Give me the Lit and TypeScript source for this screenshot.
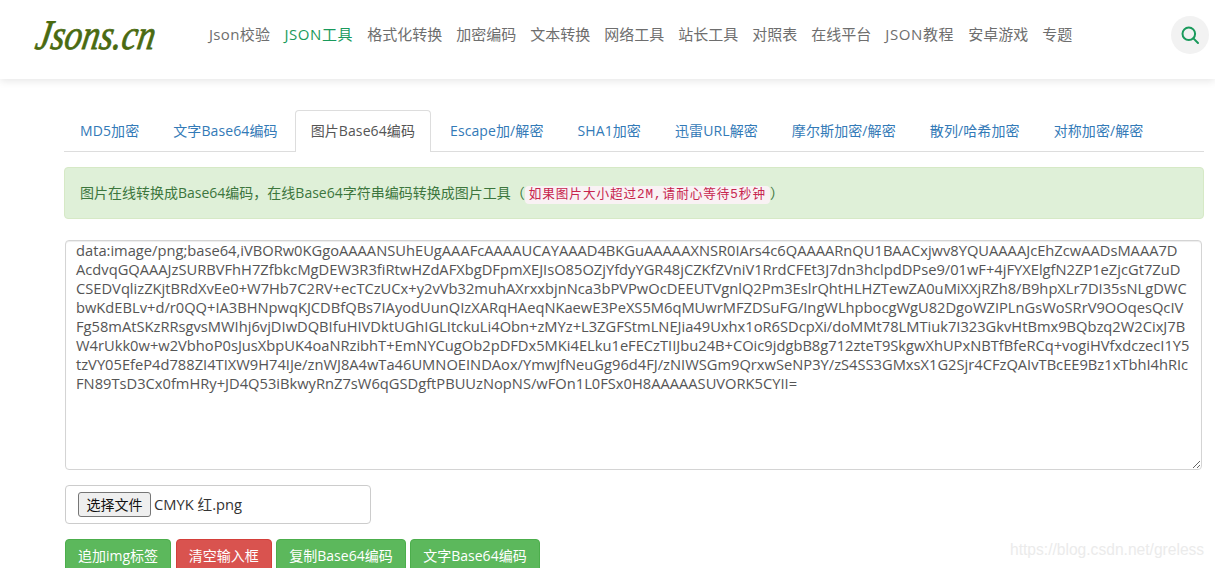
import { LitElement, html, css } from "lit";
import { customElement } from "lit/decorators.js";

const NAV = ["Json校验", "JSON工具", "格式化转换", "加密编码", "文本转换", "网络工具", "站长工具", "对照表", "在线平台", "JSON教程", "安卓游戏", "专题"];
const TABS = ["MD5加密", "文字Base64编码", "图片Base64编码", "Escape加/解密", "SHA1加密", "迅雷URL解密", "摩尔斯加密/解密", "散列/哈希加密", "对称加密/解密"];
const DATA = [
  "data:image/png;base64,iVBORw0KGgoAAAANSUhEUgAAAFcAAAAUCAYAAAD4BKGuAAAAAXNSR0IArs4c6QAAAARnQU1BAACxjwv8YQUAAAAJcEhZcwAADsMAAA7D",
  "AcdvqGQAAAJzSURBVFhH7ZfbkcMgDEW3R3fiRtwHZdAFXbgDFpmXEJIsO85OZjYfdyYGR48jCZKfZVniV1RrdCFEt3J7dn3hclpdDPse9/01wF+4jFYXElgfN2ZP1eZjcGt7ZuD",
  "CSEDVqlizZKjtBRdXvEe0+W7Hb7C2RV+ecTCzUCx+y2vVb32muhAXrxxbjnNca3bPVPwOcDEEUTVgnlQ2Pm3EslrQhtHLHZTewZA0uMiXXjRZh8/B9hpXLr7DI35sNLgDWC",
  "bwKdEBLv+d/r0QQ+IA3BHNpwqKJCDBfQBs7IAyodUunQIzXARqHAeqNKaewE3PeXS5M6qMUwrMFZDSuFG/IngWLhpbocgWgU82DgoWZIPLnGsWoSRrV9OOqesQcIV",
  "Fg58mAtSKzRRsgvsMWIhj6vjDIwDQBIfuHIVDktUGhIGLItckuLi4Obn+zMYz+L3ZGFStmLNEJia49Uxhx1oR6SDcpXi/doMMt78LMTiuk7I323GkvHtBmx9BQbzq2W2CixJ7B",
  "W4rUkk0w+w2VbhoP0sJusXbpUK4oaNRzibhT+EmNYCugOb2pDFDx5MKi4ELku1eFECzTIIJbu24B+COic9jdgbB8g712zteT9SkgwXhUPxNBTfBfeRCq+vogiHVfxdczecI1Y5",
  "tzVY05EfeP4d788ZI4TIXW9H74IJe/znWJ8A4wTa46UMNOEINDAox/YmwJfNeuGg96d4FJ/zNIWSGm9QrxwSeNP3Y/zS4SS3GMxsX1G2Sjr4CFzQAIvTBcEE9Bz1xTbhI4hRIc",
  "FN89TsD3Cx0fmHRy+JD4Q53iBkwyRnZ7sW6qGSDgftPBUUzNopNS/wFOn1L0FSx0H8AAAAASUVORK5CYII=",
].join("\n");

@customElement("app-root")
export class AppRoot extends LitElement {
  static styles = css`
    :host {
      display: block;
      position: relative;
      height: 568px;
      overflow: hidden;
      background: #fff;
      font-family: "Open Sans", "Noto Sans CJK SC", sans-serif;
      font-size: 14px;
      color: #555;
    }
    * { box-sizing: border-box; }
    .header {
      display: flex;
      align-items: center;
      height: 79px;
      padding: 0 6px 10px 35px;
      background: #fff;
      box-shadow: 0 2px 8px rgba(0, 0, 0, 0.1);
    }
    .logo {
      width: 174px;
      font-family: "Liberation Serif", serif;
      font-style: italic;
      font-size: 42px;
      color: #4a6a10;
      -webkit-text-stroke: 0.8px #4a6a10;
      line-height: 40px;
      white-space: nowrap;
      transform: translateX(-2px) skewX(-10deg) scaleX(0.83);
      transform-origin: left bottom;
    }
    .nav { display: flex; gap: 14px; margin-top: -2px; font-size: 15px; color: #6e6e6e; white-space: nowrap; }
    .nav .on { color: #1a9a5c; }
    .nav .json { letter-spacing: 0.6px; }
    .nav .lower { letter-spacing: 0.33px; }
    .search {
      margin-left: auto;
      width: 38px;
      height: 38px;
      border-radius: 50%;
      background: #f2f2f2;
      display: flex;
      align-items: center;
      justify-content: center;
    }
    .main { padding: 31px 11px 0 64px; }
    .tabs { display: flex; border-bottom: 1px solid #ddd; height: 42px; letter-spacing: 0.1px; }
    .tab {
      margin-right: 2px;
      padding: 10px 15px;
      border: 1px solid transparent;
      border-bottom: 0;
      border-radius: 4px 4px 0 0;
      height: 42px;
      line-height: 20px;
      color: #337ab7;
      white-space: nowrap;
    }
    .tab.on {
      color: #555;
      background: #fff;
      border-color: #ddd;
      margin-left: -1px;
      margin-right: 3px;
    }
    .alert {
      margin-top: 15px;
      height: 52px;
      padding: 15px;
      background: #dff0d8;
      border: 1px solid #d6e9c6;
      border-radius: 4px;
      color: #3c763d;
      line-height: 20px;
      white-space: nowrap;
    }
    code {
      font-family: "Liberation Mono", "Noto Sans CJK SC", monospace;
      font-size: 12.6px;
      letter-spacing: 0.95px;
      color: #c7254e;
      background: #f9f2f4;
      border-radius: 4px;
      padding: 2px 4px;
    }
    textarea {
      display: block;
      margin: 21px 0 0 1px;
      width: 1137px;
      height: 230px;
      padding: 0 10px;
      border: 1px solid #d4d4d4;
      border-radius: 4px;
      box-shadow: inset 0 1px 1px rgba(0, 0, 0, 0.075);
      font: inherit;
      font-size: 14.7px;
      line-height: 19px;
      color: #555;
      white-space: pre;
      overflow: hidden;
      outline: none;
    }
    .file {
      display: flex;
      align-items: center;
      margin: 15px 0 0 1px;
      width: 306px;
      height: 39px;
      padding: 0 12px 1px;
      border: 1px solid #ccc;
      border-radius: 4px;
      color: #333;
      white-space: nowrap;
    }
    .file span { font-size: 14.7px; margin-top: -1px; }
    .file button {
      width: 73px;
      height: 25px;
      margin-right: 3px;
      padding: 0;
      border: 1px solid #767676;
      border-radius: 3px;
      background: #efefef;
      color: #111;
      font: inherit;
    }
    .actions { display: flex; gap: 4.6px; margin: 15px 0 0 1px; }
    .btn {
      height: 34px;
      padding: 6px 12px;
      border: 1px solid #4cae4c;
      border-radius: 4px;
      background: #5cb85c;
      color: #fff;
      line-height: 20px;
      white-space: nowrap;
    }
    .btn.red { background: #d9534f; border-color: #d43f3a; }
    .mark {
      position: absolute;
      left: 1010px;
      top: 540px;
      font-family: "Liberation Sans", sans-serif;
      font-size: 15.6px;
      line-height: 20px;
      color: #ebebeb;
      white-space: nowrap;
    }
  `;

  private navClass(n: string, i: number) {
    const parts: string[] = [];
    if (i === 1) parts.push("on");
    if (n.startsWith("JSON")) parts.push("json");
    if (n.startsWith("Json")) parts.push("lower");
    return parts.join(" ");
  }

  render() {
    return html`
      <div class="header">
        <div class="logo">Jsons.cn</div>
        <div class="nav">
          ${NAV.map((n, i) => html`<span class=${this.navClass(n, i)}>${n}</span>`)}
        </div>
        <div class="search">
          <svg width="20" height="20" viewBox="0 0 20 20" fill="none" stroke="#1a9a5c" stroke-width="2">
            <circle cx="8.8" cy="8.8" r="6.3"></circle>
            <path d="M13.4 13.4 18 18" stroke-linecap="round"></path>
          </svg>
        </div>
      </div>
      <div class="main">
        <div class="tabs">
          ${TABS.map((t, i) => html`<div class="tab ${i === 2 ? "on" : ""}">${t}</div>`)}
        </div>
        <div class="alert">图片在线转换成Base64编码，在线Base64字符串编码转换成图片工具（<code>如果图片大小超过2M,请耐心等待5秒钟</code>）</div>
        <textarea readonly .value=${DATA}></textarea>
        <div class="file"><button>选择文件</button><span>CMYK 红.png</span></div>
        <div class="actions">
          <div class="btn">追加img标签</div>
          <div class="btn red">清空输入框</div>
          <div class="btn">复制Base64编码</div>
          <div class="btn">文字Base64编码</div>
        </div>
      </div>
      <div class="mark">https://blog.csdn.net/greless</div>
    `;
  }
}
